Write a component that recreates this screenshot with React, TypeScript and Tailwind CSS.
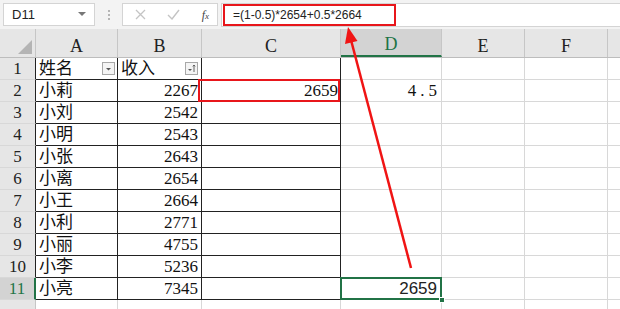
import React from 'react'

const rows = [
  { a: '姓名', b: '收入', header: true },
  { a: '小莉', b: '2267' },
  { a: '小刘', b: '2542' },
  { a: '小明', b: '2543' },
  { a: '小张', b: '2643' },
  { a: '小离', b: '2654' },
  { a: '小王', b: '2664' },
  { a: '小利', b: '2771' },
  { a: '小丽', b: '4755' },
  { a: '小李', b: '5236' },
  { a: '小亮', b: '7345' },
]

const serif = { fontFamily: '"Liberation Serif", "Noto Sans CJK SC", serif' }
const sans = { fontFamily: '"Liberation Sans", Arial, sans-serif' }

function FilterBtn({ sort }: { sort?: boolean }) {
  return (
    <div className="w-[13px] h-[13px] border border-[#a8a8a8] bg-[#f4f4f4] flex items-center justify-center">
      <svg width="11" height="11" viewBox="0 0 11 11">
        {sort ? (
          <>
            <path d="M2 6 L6 6 L4 8 Z" fill="#555" />
            <path d="M8 2 L8 9 M6.8 3.4 L8 2 L9.2 3.4" stroke="#555" strokeWidth="0.9" fill="none" />
          </>
        ) : (
          <path d="M3 5 L8 5 L5.5 7.5 Z" fill="#555" />
        )}
      </svg>
    </div>
  )
}

export default function App() {
  return (
    <div className="w-[620px] h-[309px] overflow-hidden bg-white relative select-none" style={sans}>
      {/* 编辑栏 */}
      <div className="h-[29px] bg-[#f3f3f3] flex items-start pt-[3px]">
        <div className="ml-[3px] w-[92px] h-[23px] bg-white border border-[#d4d4d4] flex items-center justify-between px-[8px]">
          <span className="text-[13px] text-[#222]">D11</span>
          <svg width="8" height="5" viewBox="0 0 8 5"><path d="M0 0 L8 0 L4 4 Z" fill="#777" /></svg>
        </div>
        <div className="w-[27px] h-[23px] flex flex-col items-center justify-center gap-[2px]">
          <div className="w-[2px] h-[2px] bg-[#b5b5b5]" />
          <div className="w-[2px] h-[2px] bg-[#b5b5b5]" />
          <div className="w-[2px] h-[2px] bg-[#b5b5b5]" />
        </div>
        <div className="w-[96px] h-[23px] bg-white border border-[#d4d4d4] flex items-center justify-between pl-[12px] pr-[8px]">
          <svg width="11" height="11" viewBox="0 0 11 11"><path d="M1 1 L10 10 M10 1 L1 10" stroke="#c4c4c4" strokeWidth="1.3" /></svg>
          <svg width="13" height="11" viewBox="0 0 13 11"><path d="M1 6 L5 10 L12 1" stroke="#c4c4c4" strokeWidth="1.4" fill="none" /></svg>
          <span className="text-[12px] italic text-[#444]" style={serif}>f<span className="text-[9px]">x</span></span>
        </div>
        <div className="ml-[3px] flex-1 h-[24px] bg-white border-y border-l border-[#d4d4d4] flex items-center pl-[1px]">
          <div className="h-[22px] w-[173px] border-2 border-[#e8161b] flex items-center pl-[8px] text-[12px] text-[#222]">
            =(1-0.5)*2654+0.5*2664
          </div>
        </div>
      </div>

      {/* 列标题 */}
      <div className="flex h-[29px] bg-[#e6e6e6] border-b border-[#bdbdbd]" style={serif}>
        <div className="w-[36px] shrink-0 border-r border-[#c6c6c6] relative">
          <div className="absolute right-[3px] bottom-[3px] w-0 h-0 border-l-[14px] border-l-transparent border-b-[14px] border-b-[#b4b4b4]" />
        </div>
        {[
          { l: 'A', w: 'w-[82px]' },
          { l: 'B', w: 'w-[84px]' },
          { l: 'C', w: 'w-[139px]' },
          { l: 'D', w: 'w-[101px]', sel: true },
          { l: 'E', w: 'w-[83px]' },
          { l: 'F', w: 'w-[83px]' },
        ].map((c) => (
          <div
            key={c.l}
            className={`${c.w} shrink-0 flex items-end justify-center pb-[2px] text-[18px] leading-none border-r border-[#c6c6c6] ${
              c.sel ? 'bg-[#d3d3d3] text-[#217346] border-b-2 border-b-[#217346]' : 'text-[#222]'
            }`}
          >
            {c.l}
          </div>
        ))}
        <div className="flex-1" />
      </div>

      {/* 数据行 */}
      {rows.map((r, i) => {
        const n = i + 1
        const last = n === 11
        return (
          <div key={n} className="flex h-[22px] text-[17px] text-[#111]" style={serif}>
            <div
              className={`w-[36px] shrink-0 flex items-center justify-center border-b border-[#d8d8d8] ${
                last ? 'bg-[#d3d3d3] text-[#217346] border-r-2 border-r-[#217346]' : 'bg-[#e6e6e6] text-[#222] border-r border-r-[#222]'
              }`}
            >
              {n}
            </div>
            <div className="w-[82px] shrink-0 flex items-center justify-between pl-[3px] pr-[2px] border-r border-b border-[#222]" style={serif}>
              <span className="leading-none">{r.a}</span>
              {r.header && <FilterBtn />}
            </div>
            <div className={`w-[84px] shrink-0 flex items-center pr-[3px] border-r border-b border-[#222] ${r.header ? 'justify-between pl-[3px]' : 'justify-end'}`}>
              <span className="leading-none">{r.b}</span>
              {r.header && <FilterBtn sort />}
            </div>
            <div className="w-[139px] shrink-0 flex items-center justify-end pr-[2px] border-r border-b border-[#222] relative">
              {n === 2 && (
                <>
                  <span className="leading-none">2659</span>
                  <div className="absolute left-[-4px] top-[-1px] right-[0px] bottom-[-1px] border-2 border-[#e8161b]" />
                </>
              )}
            </div>
            <div className="w-[101px] shrink-0 flex items-center justify-end pr-[4px] border-r border-b border-[#d8d8d8] relative">
              {n === 2 && <span className="leading-none tracking-[4px] mr-[-4px]">4.5</span>}
              {last && (
                <>
                  <span className="leading-none text-[17px] text-[#222]" style={sans}>2659</span>
                  <div className="absolute left-[-1px] top-[-1px] right-[-1px] bottom-[-1px] border-2 border-[#217346]" />
                  <div className="absolute right-[-4px] bottom-[-4px] w-[6px] h-[6px] bg-[#217346] border border-white" />
                </>
              )}
            </div>
            <div className="w-[83px] shrink-0 border-r border-b border-[#d8d8d8]" />
            <div className="w-[83px] shrink-0 border-r border-b border-[#d8d8d8]" />
            <div className="flex-1 border-b border-[#d8d8d8]" />
          </div>
        )
      })}
      <div className="flex h-[22px]">
        <div className="w-[36px] shrink-0 bg-[#e6e6e6] border-r border-[#c6c6c6]" />
        <div className="w-[82px] shrink-0 border-r border-[#d8d8d8]" />
        <div className="w-[84px] shrink-0 border-r border-[#d8d8d8]" />
        <div className="w-[139px] shrink-0 border-r border-[#d8d8d8]" />
        <div className="w-[101px] shrink-0 border-r border-[#d8d8d8]" />
        <div className="w-[83px] shrink-0 border-r border-[#d8d8d8]" />
        <div className="w-[83px] shrink-0 border-r border-[#d8d8d8]" />
      </div>

      {/* 红色箭头 */}
      <svg className="absolute inset-0 pointer-events-none" width="620" height="309">
        <line x1="411" y1="268" x2="351" y2="40" stroke="#f01414" strokeWidth="2.5" />
        <polygon points="348,27 357.5,41 345,44" fill="#f01414" />
      </svg>
    </div>
  )
}
